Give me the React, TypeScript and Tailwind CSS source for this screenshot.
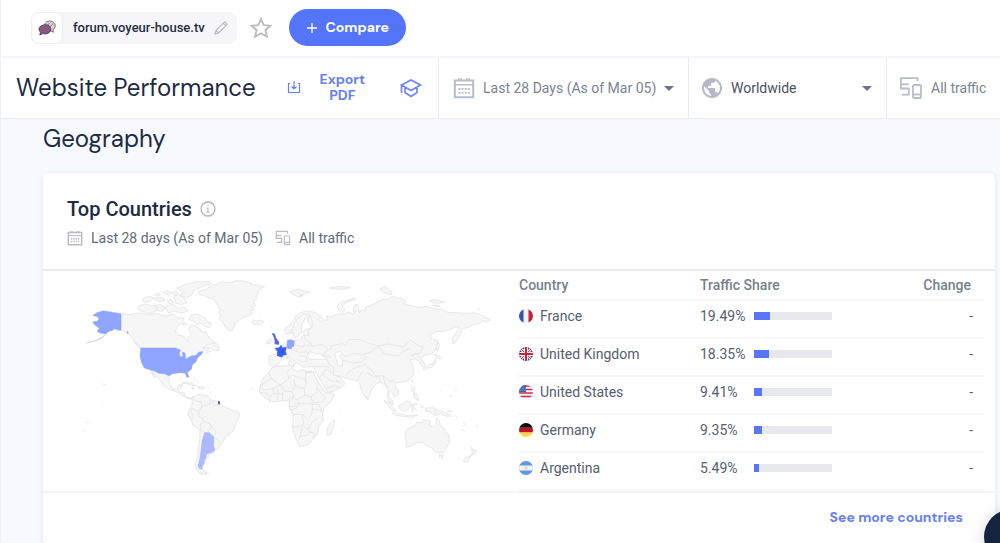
import React, { useId } from "react";

const display = "font-['DM_Sans',Inter,sans-serif]";

function CalendarIcon({ className }: { className: string }) {
  return (
    <svg className={className} viewBox="0 0 22 22" fill="none" stroke="currentColor" aria-hidden="true">
      <path d="M1.800 3.500h18.400v16.700H1.800z" strokeWidth="2" />
      <path d="M1.700 7.700h18.600" strokeWidth="1.500" />
      <path d="M5.700 1v2.600M8.200 1v2.600M13.800 1v2.600M16.300 1v2.600" strokeWidth="1.500" />
      <path d="M5.500 12h11.500M5.500 15.800h11.500" strokeWidth="1.900" strokeDasharray="1.900 1.200" />
    </svg>
  );
}

function DevicesIcon({ className }: { className: string }) {
  return (
    <svg className={className} viewBox="0 0 24 24" fill="none" stroke="currentColor" strokeWidth="1.800" aria-hidden="true">
      <path d="M18.600 5.200V2.200H2v10.300h7.800v6.200H3" />
      <path d="M2 8.300h7.800" />
      <rect x="14" y="9" width="8" height="13" rx="1" />
      <path d="M14 18.500h8" />
    </svg>
  );
}

function ForumIcon() {
  return (
    <svg className="size-5" viewBox="0 0 20 20" aria-hidden="true">
      <path d="M11 3.200c4-.8 7.500 1.500 7.200 4.800-.1 1.700-1 3-2.200 3.800l.4 2.500-2.700-1.500c-4 .4-6.500-1.700-6.300-4.800.1-2.300 1.500-4.200 3.600-4.800z" fill="#d9cdd6" stroke="#85737f" strokeWidth="1" />
      <path d="M10.500 7.500l2-2.500M13 9l3-3.500" stroke="#85737f" strokeWidth=".8" />
      <path d="M7.500 6.800c3.500-.3 6.300 1.500 6.300 4.400 0 2.800-2.500 4.700-5.800 4.700-.8 0-1.500-.1-2.200-.3L2.800 17l.7-2.700c-1-.8-1.500-1.800-1.500-3 0-2.500 2.400-4.300 5.500-4.500z" fill="#855980" stroke="#523d50" strokeWidth=".9" />
    </svg>
  );
}

function Caret() {
  return <svg className="h-[5px] w-2.5 shrink-0 text-[#6c7480]" viewBox="0 0 10 5" fill="currentColor" aria-hidden="true"><path d="M0 0h10L5 5z" /></svg>;
}

type Code = "fr" | "gb" | "us" | "de" | "ar";

function Flag({ code }: { code: Code }) {
  const id = useId();
  return (
    <svg className="size-3.5 shrink-0" viewBox="0 0 14 14" aria-hidden="true">
      <clipPath id={id}><circle cx="7" cy="7" r="7" /></clipPath>
      <g clipPath={`url(#${id})`}>
        {code === "fr" && <><path d="M0 0h14v14H0z" fill="#f2f3f5" /><path d="M0 0h4.500v14H0z" fill="#3553b5" /><path d="M9.500 0H14v14H9.500z" fill="#c9203b" /></>}
        {code === "gb" && <><path d="M0 0h14v14H0z" fill="#3d4a8c" /><path d="M0 0l14 14M14 0L0 14" stroke="#fff" strokeWidth="2.800" /><path d="M0 0l14 14M14 0L0 14" stroke="#cf2f46" strokeWidth="1" /><path d="M7 0v14M0 7h14" stroke="#fff" strokeWidth="3.800" /><path d="M7 0v14M0 7h14" stroke="#cf2039" strokeWidth="2" /></>}
        {code === "us" && <><path d="M0 0h14v14H0z" fill="#f4f4f6" /><path d="M0 1h14M0 4.500h14M0 8h14M0 11.500h14" stroke="#cf2f46" strokeWidth="1.700" /><path d="M0 0h7v7.200H0z" fill="#3a64b0" /><path d="M1 3h6M1 5.200h6" stroke="#d5e1f5" strokeWidth=".7" strokeDasharray=".8 1" /></>}
        {code === "de" && <><path d="M0 0h14v4.800H0z" fill="#0c0c0c" /><path d="M0 4.700h14v4.800H0z" fill="#b91425" /><path d="M0 9.400h14V14H0z" fill="#fdd44a" /></>}
        {code === "ar" && <><path d="M0 0h14v14H0z" fill="#5f97e2" /><path d="M0 4.500h14v5H0z" fill="#f2f3f5" /><circle cx="7" cy="7" r="1.400" fill="#f7cf8e" /></>}
      </g>
    </svg>
  );
}

function WorldMap() {
  return (
    <svg className="h-[208px] w-[430px]" viewBox="0 0 1290 624" role="img" aria-label="Traffic by country" strokeLinejoin="round">
      <g fill="#f6f6f6" stroke="#dedede" strokeWidth="2">
        {/* North America */}
        <path d="M153 125L180 128 205 123 232 127 258 125 285 131 310 127 325 137 342 138 338 150 323 163 316 178 324 189 341 192 348 204 354 209 355 197 362 185 356 170 362 158 378 162 391 171 396 181 406 178 416 195 431 207 436 214 410 219 397 230 408 226 420 226 414 234 399 238 390 240 380 251 365 253 350 261 345 245 333 236 320 228 212 228 201 219 192 207 180 190 172 179 153 175Z" />
        <path d="M436 211L447 221 446 235 436 237 425 230 430 222ZM411 235L423 238 409 244ZM192 208L202 215 211 228 200 221Z" />
        <path d="M363 129L382 127 405 137 410 147 424 154 418 167 405 164 394 154 379 157 371 147 356 143ZM205 103L225 96 247 101 266 107 255 119 238 124 215 118 203 110ZM252 101L272 98 285 106 277 118 261 116ZM290 100L310 98 324 108 345 106 355 116 337 123 315 118 296 122 286 111ZM219 79L238 72 252 78 240 87 226 91 218 86ZM252 79L276 76 286 83 268 91ZM253 68L264 63 272 68 261 73ZM279 62L290 55 303 63 296 71ZM311 74L325 68 342 78 351 91 332 98 316 92ZM304 62L318 57 324 64 315 71ZM320 48L348 37 380 29 418 29 422 36 396 44 372 55 365 69 350 77 328 68 344 61ZM292 85L304 82 311 92 297 95ZM336 155L345 151 351 157 342 162Z" />
        <path d="M388 68L384 61 398 54 410 51 427 38 442 37 450 30 482 31 496 26 528 28 544 34 540 38 560 39 585 44 570 50 563 57 567 64 558 72 562 79 552 88 556 101 545 104 553 114 540 117 548 124 530 134 517 138 502 148 494 157 488 175 477 176 468 168 459 152 449 139 451 130 444 120 454 114 445 107 439 94 429 80 410 76 399 70Z" />
        <path d="M545 149L551 144 559 147 571 144 581 149 577 155 564 159 549 156Z" />
        <path d="M240 294L257 299 270 304 285 305 297 316 299 337 309 350 321 350 327 339 338 338 334 348 325 354 330 361 342 361 345 374 361 380 368 376 366 381 352 379 335 369 319 359 299 353 280 340 271 326 255 307 246 301 257 317 251 314Z" />
        <path d="M336 334L350 330 365 334 378 341 365 339 350 335ZM383 344L397 342 406 348 396 350 384 349ZM364 348L373 349 367 351ZM371 316L375 324M380 327L386 331M410 345L418 347M420 358L422 366" />
        {/* South America */}
        <path d="M366 377L378 369 391 367 414 372 420 382 434 386 450 392 460 403 482 412 502 418 509 427 506 441 496 455 493 474 483 484 469 491 463 504 453 520 444 530 435 530 433 541 417 547 414 559 406 560 408 568 400 574 397 590 404 595 411 606 398 608 386 601 377 587 377 573 383 551 385 531 390 499 389 473 371 461 362 442 354 429 358 411 366 398Z" />
        <path d="M372 371L370 383 384 389 393 387 395 403 386 419 367 409M395 403L422 396 419 384M426 384L431 399 441 402 445 390M386 419L386 433 397 437 401 448 421 457 429 470 437 479 433 492M401 448L390 457 394 466 391 476 398 478 402 481M421 457L423 470 413 475 418 482M434 495L452 517M366 408L361 419 370 427 365 438" fill="none" />
        <path d="M410 601L418 600M96 335L108 340M99 397L101 400M48 450L58 453M39 476L44 477M543 351L548 353" />
      </g>
      <g transform="translate(540 0)" fill="#f6f6f6" stroke="#dedede" strokeWidth="2">
        {/* Europe and Asia */}
        <path d="M104 179L105 168 119 159 128 148 138 132 151 122 173 116 188 119 196 122 211 130 219 138 203 142 211 148 223 143 232 145 229 131 244 134 263 126 285 126 297 119 306 126 313 123 309 111 316 98 323 99 329 122 337 111 346 119 346 106 360 101 380 91 397 82 415 81 429 72 441 79 457 80 468 89 462 97 487 102 511 106 529 103 551 110 574 111 593 121 633 123 661 124 672 122 700 131 721 144 709 150 698 146 688 155 668 158 653 167 635 170 633 184 622 201 611 217 606 205 614 187 628 167 616 164 604 172 583 178 559 179 540 190 544 201 560 204 562 225 550 243 536 248 519 252 516 263 525 278 521 286 512 281 509 268 493 261 478 265 485 273 490 286 493 304 486 315 474 326 453 332 438 331 434 341 446 355 445 367 433 375 428 364 419 357 415 371 426 386 430 399 421 394 412 377 414 357 407 343 400 336 391 330 379 335 366 350 359 371 350 380 340 367 331 344 329 332 315 325 294 320 274 314 264 310 274 321 286 334 273 347 248 359 233 361 223 342 207 318 197 298 190 284 160 286 147 277 139 271 132 280 126 266 121 257 109 255 93 256 94 263 83 279 65 283 56 277 57 252 72 248 80 243 78 232 91 222 106 214 111 203 123 202 132 205 153 204 155 195 163 187 157 181 166 172 181 170 184 162 173 148 176 134 162 144 155 160 154 180 143 194 132 197 130 185 119 183 110 188Z" />
        <path d="M172 249L179 239 190 242 196 247 207 244 219 252 232 261 214 263 192 262 178 261ZM254 243L271 237 277 246 268 253 278 265 276 283 264 280 260 267Z" fill="white" />
        <path d="M114 252L127 262 137 272 131 278 119 264 110 259ZM116 268L120 269 118 279ZM123 280L132 281 130 285ZM52 207L60 201 65 205 62 214 51 216ZM120 59L145 51 163 57 180 61 161 67 149 76 130 69ZM149 68L159 69 151 75ZM238 48L269 43 300 46 287 51 266 52ZM264 111L260 103 271 93 293 84 316 78 314 83 287 91 276 102 285 114 274 121ZM389 51L405 44 427 59 423 68 404 64ZM539 86L557 83 584 90 571 93 549 93ZM550 101L563 99 570 104ZM681 112L691 111M564 206L568 221 562 239 558 230ZM554 247L569 252 575 260 558 260ZM555 261L557 274 544 287 529 289 522 294 519 289 535 280 548 276ZM486 323L489 328 487 332Z" />
        <path d="M119 184L128 170 134 151 146 136 161 126 180 129 185 143 190 163 173 177 177 189 163 191 167 205 182 214 189 224 218 217 235 232 219 250 245 257M132 205L137 220 155 225 166 220 189 223M143 227L137 238 151 242 169 239 179 246M147 252L169 254 173 266 156 270 143 263M232 263L236 277 251 285 251 310 273 315M190 284L226 283 239 287M240 235L244 221 277 215 287 221 296 203 326 202 350 211 370 218 386 222 410 216 444 221 462 225 481 204 507 222 520 225 510 243 483 250M386 222L361 241 339 248 312 243 285 254 277 246M385 223L404 246 445 251 462 237 480 229M278 265L309 273 335 270 352 252M288 312L302 294 324 285 344 277 366 296 379 312 399 311 417 327 433 327M321 325L332 306 342 293M347 300L374 315 386 315 392 330M399 311L405 337 416 346M484 252L501 243 512 263M207 318L218 306 241 326 269 329M230 350L255 341 273 348M218 306L227 291 247 302" fill="none" />
        {/* Africa */}
        <path d="M65 288L79 283 109 281 124 280 126 291 143 299 154 293 169 298 188 297 196 313 209 337 225 362 249 363 255 367 241 391 222 407 218 424 220 447 206 463 203 485 188 503 177 516 160 522 149 524 143 511 133 487 126 463 131 441 126 421 117 403 118 388 96 385 79 389 64 389 45 378 29 362 29 347 35 328 45 313 57 301Z" />
        <path d="M57 301L63 319 47 329 29 345M63 319L91 339 118 319 109 301 121 291M91 339L69 350 43 353 30 350M118 319L126 310 167 323 167 296M167 301L199 301M167 323L169 331 163 350 135 342 133 324M135 342L126 359 103 357 91 339M103 357L98 366 98 386M126 359L131 368 127 381 118 389M69 350L71 365 60 374 59 389M82 352L84 365 98 366M71 365L84 365 82 386M163 350L165 370 182 374 201 361 202 330M165 370L145 381 135 381 126 371M182 374L190 391 217 390 226 376 213 364 204 350M145 389L147 394 187 394 187 411 215 416 220 432M188 411L184 429 172 439 157 427 130 427M157 427L160 457 151 464 128 464M160 463L153 477 151 491 147 501M160 463L175 471 180 481 169 491 153 492M180 481L193 484 188 496 202 485M175 471L187 449 205 440M30 361L50 364 55 376M117 403L134 404 139 392M122 374L116 379 118 389M117 403L123 414 141 407 145 393M188 397L205 397 214 413" fill="none" />
        <path d="M253 443L254 455 242 487 232 490 229 478 237 459 244 451ZM268 419L271 421M276 473L280 474M350 373L357 380 352 384ZM402 385L414 390 428 405 439 418 428 416 415 403ZM426 423L449 426 470 430 487 431 504 428 485 436 465 434 436 430ZM447 400L457 396 471 386 483 393 476 411 462 418 449 411ZM484 398L502 395 490 404 500 415 489 409 487 420ZM486 343L495 348 493 361 504 373 506 386 491 378 493 364 485 355ZM513 399L521 406 515 409ZM526 408L549 407 565 415 590 423 604 433 587 432 571 425 555 432 543 421 526 416ZM591 417L607 417 603 422ZM616 430L625 439M641 451L648 463M633 474L644 477M676 462L685 463M574 355L569 361M606 371L598 376M613 349L622 354M521 295L524 297" />
        <path d="M464 479L475 470 493 461 501 450 513 453 518 444 533 445 543 447 538 459 550 466 558 457 559 438 567 444 570 459 580 467 586 479 597 489 599 508 590 526 580 541 564 543 553 538 545 527 532 522 518 511 499 513 487 521 469 526 468 507ZM568 548L580 549 576 559 568 557ZM664 525L669 534 680 536 672 546 661 553 667 542ZM661 551L653 571 640 569 644 559ZM555 414L555 430" />
      </g>
      <g fill="#8fa5ff" stroke="#869bf0" strokeWidth="1">
        <path d="M153 125L153 175 143 174 134 170 126 176 117 178 108 186 91 184 81 178 88 169 72 157 68 149 82 148 87 139 79 133 68 131 80 122 100 116 124 120Z" />
        <path d="M109 184L98 197 76 207 48 214 77 205 96 196Z" fill="#c3c8dc" stroke="#c3c8dc" />
        <path d="M212 228L317 228 332 235 328 242 331 255 338 253 337 240 345 243 347 262 365 251 376 251 387 240 399 239 395 247 383 257 377 271 367 278 365 291 352 302 357 316 350 316 346 304 331 302 307 305 298 312 284 305 266 304 255 298 239 293 223 288 214 271 210 251Z" />
        <path d="M170 179L175 180 173 186Z" />
      </g>
      <path d="M403 481L418 481 432 494 433 506 431 520 436 535 424 543 411 546 408 559 404 565 403 576 397 583 398 592 390 592 383 584 389 557 393 531 395 508Z" fill="#adbaff" />
      <path d="M445 386l5 3-2 9-3-1z" fill="#303866" />
      <g transform="translate(540 0)">
        <path d="M93 220l4 8 12-2-3 12 3 10-10 1-3 6-14-4 1-13-8-9 12-1z" fill="#365bf0" stroke="#365bf0" strokeWidth="2" />
        <path d="M66 184l8 1 4 13 9 12-1 8-12-2 1-9-4-13z" fill="#526ade" stroke="#526ade" strokeWidth="1" />
        <path d="M112 205l10-2 12 3-2 17-6 3-2 6-9-1-6-9 2-8z" fill="#8fa5fb" />
        <path d="M63 166l2 1" stroke="#9da9e9" strokeWidth="2" />
      </g>
    </svg>
  );
}

const countries: { code: Code; name: string; share: number }[] = [
  { code: "fr", name: "France", share: 19.49 },
  { code: "gb", name: "United Kingdom", share: 18.35 },
  { code: "us", name: "United States", share: 9.41 },
  { code: "de", name: "Germany", share: 9.35 },
  { code: "ar", name: "Argentina", share: 5.49 },
];

function TopBar() {
  return (
    <header className="flex h-[58px] items-center border-b-2 border-[#f4f5f8] bg-white pb-px pl-[30px]">
      <div className="flex h-8 items-center rounded-lg bg-[#f6f6f8]">
        <span className="flex size-8 items-center justify-center rounded-lg border border-[#eeeef1] bg-white"><ForumIcon /></span>
        <span className="pl-2.5 text-[13px] font-medium text-[#1f2e43]">forum.voyeur-house.tv</span>
        <button type="button" aria-label="Edit website" className="mr-2 ml-2 text-[#b7b8bd]">
          <svg className="size-4" viewBox="0 0 16 16" fill="none" stroke="currentColor" strokeWidth="1.100"><path d="M2 14l1-3.700L11.800 1.700l2.500 2.500L5.600 13zM10.300 3.200l2.500 2.500M3 10.500L5.500 13" /></svg>
        </button>
      </div>
      <button type="button" aria-label="Add to favorites" className="ml-3 text-[#babcc1]">
        <svg className="size-6" viewBox="0 0 24 24" fill="none" stroke="currentColor" strokeWidth="1.900"><path d="M12 3l2.700 6.100 6.700.7-5 4.400 1.500 6.500-5.900-3.400-5.900 3.400 1.500-6.500-5-4.400 6.700-.7z" /></svg>
      </button>
      <button type="button" className={`${display} ml-4 flex h-[37px] w-[117px] items-center justify-center gap-2 rounded-full bg-[#5475fa] text-[14px] font-bold text-white`}>
        <svg className="size-3" viewBox="0 0 12 12" stroke="currentColor" strokeWidth="1.300" aria-hidden="true"><path d="M6 1v10M1 6h10" /></svg>
        Compare
      </button>
    </header>
  );
}

function FilterBar() {
  return (
    <div className="flex h-[61px] items-stretch overflow-hidden border-b border-[#e9ebef] bg-white text-[14px]">
      <div className="flex w-[437px] shrink-0 items-center justify-between pr-[15px] pl-[15px]">
        <h1 className={`${display} whitespace-nowrap text-[24px] text-[#1c2b42]`}>Website Performance</h1>
        <button type="button" className={`${display} flex items-center gap-4 pb-[3px] text-[14px] leading-4 font-bold text-[#6680ee]`}>
          <svg className="size-3.5" viewBox="0 0 14 14" fill="none" stroke="currentColor" strokeWidth="1.200" aria-hidden="true"><path d="M3 3.500H1.500v9h11v-9H11M7 1v8M4.500 6.500L7 9l2.500-2.500" /></svg>
          <span className="w-[50px]">Export PDF</span>
        </button>
        <button type="button" aria-label="Learn more" className="text-[#6c87ee]">
          <svg className="size-6" viewBox="0 0 24 24" fill="none" stroke="currentColor" strokeWidth="1.700"><path d="M12 4L2.500 9 12 14.500 21.500 9zM6 11v5.500l6 4 6-4V11M2.500 9v8" /></svg>
        </button>
      </div>
      <button type="button" className="flex w-[250px] shrink-0 items-center border-l border-[#e9ebef] pl-3.5 text-[#7d848f]">
        <CalendarIcon className="size-[22px] text-[#b9bcc9]" />
        <span className="mr-2 ml-2 whitespace-nowrap">Last 28 Days (As of Mar 05)</span>
        <Caret />
      </button>
      <label className="flex w-[198px] shrink-0 items-center border-l border-[#e9ebef] pr-3.5 pl-[11px] text-[#48525f]">
        <svg className="size-6 text-[#b5b9c7]" viewBox="0 0 24 24" fill="currentColor" aria-hidden="true"><path d="M12 2C6.480 2 2 6.480 2 12s4.480 10 10 10 10-4.480 10-10S17.520 2 12 2zm-1 17.930c-3.950-.49-7-3.850-7-7.930 0-.62.080-1.210.21-1.790L9 15v1c0 1.100.9 2 2 2v1.930zm6.900-2.540c-.26-.81-1-1.390-1.900-1.390h-1v-3c0-.55-.45-1-1-1H8v-2h2c.55 0 1-.45 1-1V7h2c1.100 0 2-.9 2-2v-.41c2.930 1.190 5 4.060 5 7.410 0 2.080-.8 3.970-2.100 5.390z" /></svg>
        <select aria-label="Region" className="ml-[7px] min-w-0 flex-1 appearance-none bg-transparent"><option>Worldwide</option></select>
        <Caret />
      </label>
      <button type="button" className="flex flex-1 items-center gap-2 border-l border-[#e9ebef] pl-3 whitespace-nowrap text-[#7d848f]">
        <DevicesIcon className="size-6 shrink-0 text-[#b9bcc9]" />
        All traffic
      </button>
    </div>
  );
}

function CountriesTable() {
  return (
    <table className="w-full table-fixed border-collapse text-left text-[14px] text-[#56606e]">
      <thead>
        <tr className="h-[29px] border-b-2 border-[#f6f7f9] text-[#78808c]">
          <th className="w-[182px] pl-px font-medium">Country</th>
          <th className="font-medium">Traffic Share</th>
          <th className="w-20 pr-[13px] text-right font-medium">Change</th>
        </tr>
      </thead>
      <tbody>
        {countries.map((c) => (
          <tr key={c.code} className="h-[38px] border-b-2 border-[#f6f7f9]">
            <td className="pb-1.5 pl-px"><div className="flex items-center gap-[7px]"><Flag code={c.code} />{c.name}</div></td>
            <td className="pb-1.5">
              <div className="flex items-center">
                <span className="w-[54px]">{c.share}%</span>
                <span className="block h-2 w-[78px] bg-[#e7e8ec]"><span className="block h-2 bg-[#5877f8]" style={{ width: `${c.share + 1}%` }} /></span>
              </div>
            </td>
            <td className="pr-[11px] pb-1.5 text-right">-</td>
          </tr>
        ))}
      </tbody>
    </table>
  );
}

export default function App() {
  return (
    <div className="h-screen overflow-hidden border-l border-[#eef0f4] bg-[#f6f9fe] font-[Roboto,sans-serif]">
      <TopBar />
      <FilterBar />
      <main className="pr-[5px] pl-[42px]">
        <h2 className={`${display} pt-1 text-[24px] leading-8 text-[#1c2b42]`}>Geography</h2>
        <section className="mt-[18px] rounded-md bg-white shadow-[0_1px_4px_rgba(30,50,90,0.1)]">
          <div className="flex h-[98px] flex-col gap-[5px] border-b-2 border-[#eaebee] px-6 pt-6">
            <div className="flex items-center gap-2">
              <h3 className="text-[20px] leading-6 font-medium text-[#1c2b42]">Top Countries</h3>
              <svg className="size-4 text-[#b4b6bb]" viewBox="0 0 16 16" fill="none" stroke="currentColor" strokeWidth="1.300" aria-hidden="true"><circle cx="8" cy="8" r="7" /><path d="M6.800 7.200H8V11M6.500 11.200h3M7.500 4.800h1.200" strokeWidth="1.100" /></svg>
            </div>
            <div className="flex items-center gap-2 text-[14px] leading-6 text-[#626a77]">
              <CalendarIcon className="size-4 text-[#b9bcc4]" />
              <span className="pr-1">Last 28 days (As of Mar 05)</span>
              <DevicesIcon className="size-4 text-[#b9bcc4]" />
              <span>All traffic</span>
            </div>
          </div>
          <div className="flex items-end justify-between border-b-2 border-[#f4f5f7] pr-[11px] pl-[27px]">
            <div className="self-start pt-px"><WorldMap /></div>
            <div className="w-[466px]"><CountriesTable /></div>
          </div>
          <div className="flex h-[52px] items-center justify-end pr-8 pb-1">
            <a href="#countries" className={`${display} text-[14px] font-bold text-[#6680ee]`}>See more countries</a>
          </div>
        </section>
      </main>
      <button type="button" aria-label="Open chat" className="fixed right-[-40px] bottom-[-22px] size-14 rounded-full bg-[#14233f] shadow-[0_2px_16px_rgba(0,0,0,0.15)]" />
    </div>
  );
}
